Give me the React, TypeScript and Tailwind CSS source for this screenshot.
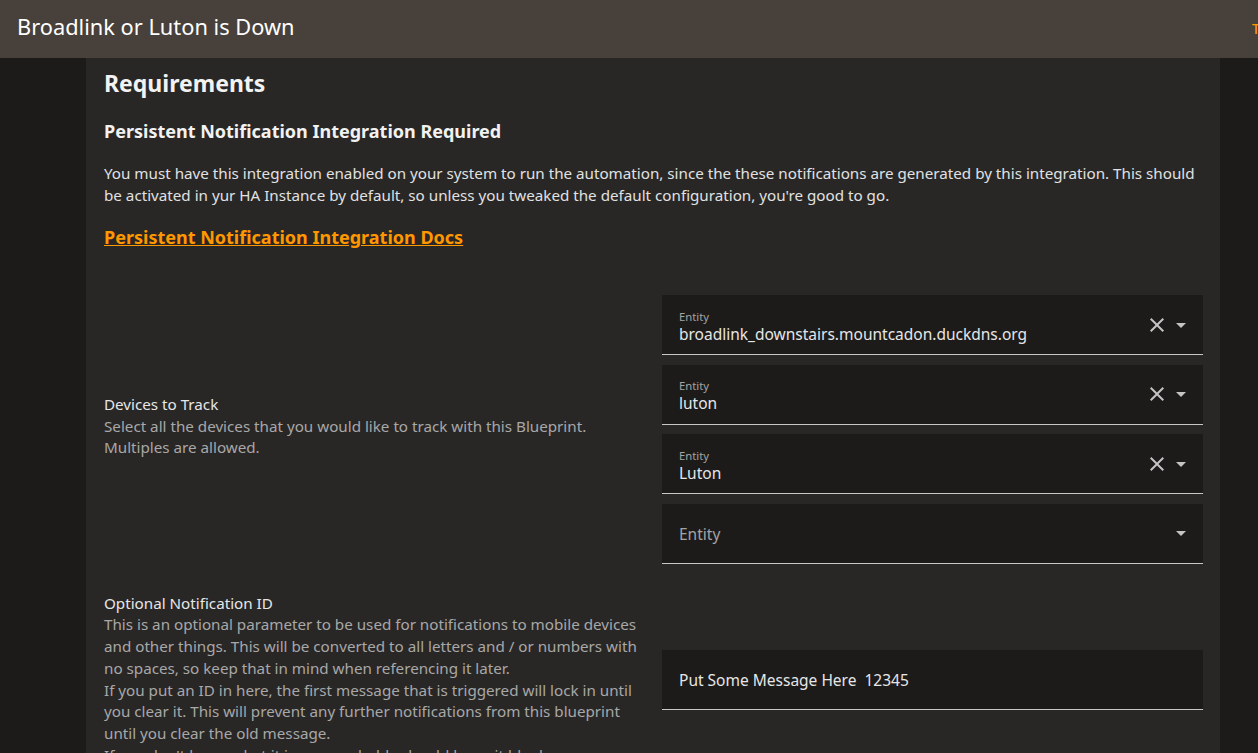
import { memo } from "react";

const font = { fontFamily: '"Noto Sans", "Liberation Sans", sans-serif' };

const CloseIcon = () => (
  <svg viewBox="0 0 24 24" className="w-[24px] h-[24px] fill-[#c4c4c4]">
    <path d="M19,6.41L17.59,5L12,10.59L6.41,5L5,6.41L10.59,12L5,17.59L6.41,19L12,13.41L17.59,19L19,17.59L13.41,12L19,6.41Z" />
  </svg>
);

const MenuDown = () => (
  <svg viewBox="0 0 24 24" className="w-[24px] h-[24px] fill-[#c4c4c4]">
    <path d="M7,10L12,15L17,10H7Z" />
  </svg>
);

type FieldProps = { label: string; value?: string; clear?: boolean };

const EntityField = ({ label, value, clear }: FieldProps) => (
  <div className="h-[60px] bg-[#1c1b1a] border-b border-[#c8c8c8] flex items-center pl-[17px] pr-[10px]">
    <div className="flex-1 min-w-0">
      {value ? (
        <div className="pt-[4px]">
          <div className="text-[11.3px] leading-[14px] text-[#a3a3a3]">{label}</div>
          <div className="text-[15.5px] leading-[20px] text-[#e6e6e6]">{value}</div>
        </div>
      ) : (
        <div className="text-[15.5px] leading-[20px] text-[#a3a3a3] pt-[2px]">{label}</div>
      )}
    </div>
    {clear && <CloseIcon />}
    <MenuDown />
  </div>
);

const App = () => {
  return (
    <div className="w-full h-[753px] overflow-hidden bg-[#1c1b1a] flex flex-col" style={font}>
      {/* ツールバー */}
      <div className="h-[58px] shrink-0 bg-[#48413b] flex items-center pl-[17px] pb-[3px] overflow-hidden">
        <div className="w-[1235px] shrink-0 text-white text-[21.8px]">Broadlink or Luton is Down</div>
        <div className="text-[#ff9800] text-[14px] font-medium whitespace-nowrap pt-[1px]">TRY IT</div>
      </div>

      <div className="flex-1 flex pl-[86px]">
        <div className="w-[1134px] bg-[#282726] pl-[18px] pr-[17px] pt-[9px]">
          <h2 className="text-[#f2f2f2] text-[23px] font-bold leading-[32px]">Requirements</h2>
          <h3 className="text-[#f2f2f2] text-[18px] font-bold mt-[19px] leading-[26px]">
            Persistent Notification Integration Required
          </h3>
          <p className="text-[#e1e1e1] text-[15.2px] leading-[22px] mt-[18px]">
            You must have this integration enabled on your system to run the automation, since the these notifications are generated by this integration. This should be activated in yur HA Instance by default, so unless you tweaked the default configuration, you're good to go.
          </p>
          <a className="block mt-[18px] text-[#ff9800] text-[18px] font-bold underline leading-[26px]">
            Persistent Notification Integration Docs
          </a>

          {/* Devices to Track */}
          <div className="mt-[45px] flex items-center gap-[22px]">
            <div className="w-[536px] shrink-0 text-[15.2px] leading-[21.7px] pb-[6px]">
              <div className="text-[#e6e6e6]">Devices to Track</div>
              <div className="text-[#a8a8a8]">
                Select all the devices that you would like to track with this Blueprint. Multiples are allowed.
              </div>
            </div>
            <div className="flex-1 flex flex-col gap-[9.6px]">
              <EntityField label="Entity" value="broadlink_downstairs.mountcadon.duckdns.org" clear />
              <EntityField label="Entity" value="luton" clear />
              <EntityField label="Entity" value="Luton" clear />
              <EntityField label="Entity" />
            </div>
          </div>

          {/* Optional Notification ID */}
          <div className="mt-[29px] flex items-center gap-[22px]">
            <div className="w-[536px] shrink-0 text-[15.2px] leading-[21.7px]">
              <div className="text-[#e6e6e6]">Optional Notification ID</div>
              <div className="text-[#a8a8a8]">
                This is an optional parameter to be used for notifications to mobile devices and other things. This will be converted to all letters and / or numbers with no spaces, so keep that in mind when referencing it later.
                <br />
                If you put an ID in here, the first message that is triggered will lock in until you clear it. This will prevent any further notifications from this blueprint until you clear the old message.
                <br />
                If you don't know what it is, you probably should leave it blank.
              </div>
            </div>
            <div className="flex-1">
              <div className="h-[60px] bg-[#1c1b1a] border-b border-[#c8c8c8] flex items-center pl-[17px] pt-[3px]">
                <span className="text-[15.5px] text-[#e6e6e6] whitespace-pre">Put Some Message Here  12345</span>
              </div>
            </div>
          </div>
        </div>
      </div>
    </div>
  );
};

export default memo(App);
